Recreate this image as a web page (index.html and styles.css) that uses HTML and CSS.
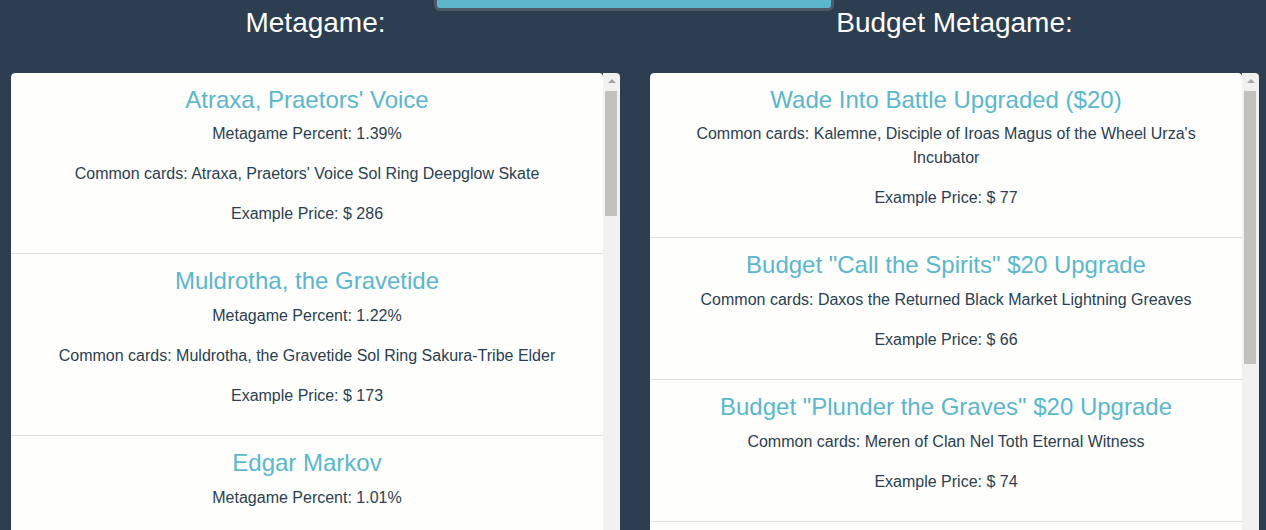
FILE: index.html
```html
<!DOCTYPE html>
<html lang="en">
<head>
<meta charset="utf-8">
<title>Metagame</title>
<link rel="stylesheet" href="styles.css">
</head>
<body>
<div class="top-tab"></div>
<main class="page">
  <section class="column">
    <h3 class="col-title">Metagame:</h3>
    <div class="panel">
      <ul class="deck-list">
        <li class="deck">
          <h4 class="deck-name">Atraxa, Praetors' Voice</h4>
          <p>Metagame Percent: 1.39%</p>
          <p>Common cards: Atraxa, Praetors' Voice Sol Ring Deepglow Skate</p>
          <p>Example Price: $ 286</p>
        </li>
        <li class="deck">
          <h4 class="deck-name">Muldrotha, the Gravetide</h4>
          <p>Metagame Percent: 1.22%</p>
          <p>Common cards: Muldrotha, the Gravetide Sol Ring Sakura-Tribe Elder</p>
          <p>Example Price: $ 173</p>
        </li>
        <li class="deck">
          <h4 class="deck-name">Edgar Markov</h4>
          <p>Metagame Percent: 1.01%</p>
          <p>Common cards: Edgar Markov Stromkirk Captain Captivating Vampire</p>
          <p>Example Price: $ 412</p>
        </li>
      </ul>
      <div class="scrollbar">
        <div class="scroll-arrow"></div>
        <div class="scroll-thumb" style="height: 125px"></div>
      </div>
    </div>
  </section>
  <section class="column">
    <h3 class="col-title">Budget Metagame:</h3>
    <div class="panel">
      <ul class="deck-list">
        <li class="deck">
          <h4 class="deck-name">Wade Into Battle Upgraded ($20)</h4>
          <p>Common cards: Kalemne, Disciple of Iroas Magus of the Wheel Urza's Incubator</p>
          <p>Example Price: $ 77</p>
        </li>
        <li class="deck">
          <h4 class="deck-name">Budget "Call the Spirits" $20 Upgrade</h4>
          <p>Common cards: Daxos the Returned Black Market Lightning Greaves</p>
          <p>Example Price: $ 66</p>
        </li>
        <li class="deck">
          <h4 class="deck-name">Budget "Plunder the Graves" $20 Upgrade</h4>
          <p>Common cards: Meren of Clan Nel Toth Eternal Witness</p>
          <p>Example Price: $ 74</p>
        </li>
        <li class="deck">
          <h4 class="deck-name">Budget "Merciless Rage" $20 Upgrade</h4>
          <p>Common cards: Anje Falkenrath Ob Nixilis, Unshackled</p>
          <p>Example Price: $ 71</p>
        </li>
      </ul>
      <div class="scrollbar">
        <div class="scroll-arrow"></div>
        <div class="scroll-thumb" style="height: 273px"></div>
      </div>
    </div>
  </section>
</main>
</body>
</html>
```

FILE: styles.css
```css
html, body {
  margin: 0;
  padding: 0;
  height: 100%;
  overflow: hidden;
}

body {
  background: #2c3e50;
  color: #2c3e50;
  font-family: "Liberation Sans", Arial, sans-serif;
  font-size: 16px;
  line-height: 1.5;
  position: relative;
}

.top-tab {
  position: absolute;
  top: -20px;
  left: 434px;
  width: 394px;
  height: 25px;
  background: #5bb7cb;
  border: 3px solid #4d5b69;
  border-radius: 0 0 6px 6px;
  z-index: 2;
}

.page {
  display: grid;
  grid-template-columns: 1fr 1fr;
  column-gap: 30px;
  padding: 6px 7px 0 11px;
}

.column {
  display: flex;
  flex-direction: column;
  min-width: 0;
}

.col-title {
  margin: 0 0 33px;
  font-size: 28px;
  font-weight: 400;
  line-height: 1.2;
  color: #ffffff;
  text-align: center;
}

.panel {
  display: flex;
  height: 480px;
  overflow: hidden;
  border-radius: 4px;
}

.deck-list {
  flex: 1;
  min-width: 0;
  list-style: none;
  margin: 0;
  padding: 0;
  background: #fefefc;
  border-radius: 4px 4px 0 0;
}

.deck {
  padding: 13px 20px 11px;
  border-bottom: 1px solid #dededb;
  text-align: center;
}

.deck-name {
  margin: 0 0 8px;
  font-size: 24px;
  font-weight: 400;
  line-height: 1.2;
  color: #5bb7cb;
}

.deck p {
  margin: 0 0 16px;
}

.scrollbar {
  width: 17px;
  flex: none;
  display: flex;
  flex-direction: column;
  background: #f1f1f0;
}

.scroll-arrow {
  height: 17px;
  display: flex;
  align-items: center;
  justify-content: center;
}

.scroll-arrow::before {
  content: "";
  width: 0;
  height: 0;
  border-left: 4px solid transparent;
  border-right: 4px solid transparent;
  border-bottom: 4px solid #a3a3a3;
  margin-top: -1px;
}

.scroll-thumb {
  margin: 1px 3px 0 2px;
  background: #c1c1be;
}
```
